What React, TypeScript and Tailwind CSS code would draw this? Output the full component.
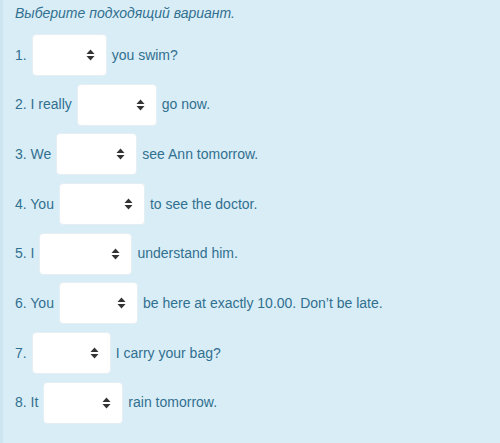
import React from "react";

const rows: { pre: string; post: string; w: number }[] = [
  { pre: "1.", post: "you swim?", w: 75 },
  { pre: "2. I really", post: "go now.", w: 80 },
  { pre: "3. We", post: "see Ann tomorrow.", w: 81 },
  { pre: "4. You", post: "to see the doctor.", w: 86 },
  { pre: "5. I", post: "understand him.", w: 93 },
  { pre: "6. You", post: "be here at exactly 10.00. Don’t be late.", w: 79 },
  { pre: "7.", post: "I carry your bag?", w: 79 },
  { pre: "8. It", post: "rain tomorrow.", w: 80 },
];

function Arrows() {
  return (
    <svg width="9" height="12" viewBox="0 0 9 12" className="shrink-0">
      <path d="M4.5 0.5 L8.5 5 L0.5 5 Z" fill="#333" />
      <path d="M0.5 7 L8.5 7 L4.5 11.5 Z" fill="#333" />
    </svg>
  );
}

export default function App() {
  return (
    <div
      className="w-[500px] h-[443px] bg-[#d9edf7] border-l-[3px] border-[#cde5f1] text-[#31708f] text-[14px] pl-[12px] pt-[3px]"
      style={{ fontFamily: '"Liberation Sans", Arial, sans-serif' }}
    >
      <div className="italic leading-[20px]">Выберите подходящий вариант.</div>
      <div className="mt-[11px] flex flex-col gap-[7.7px]">
        {rows.map((r, i) => (
          <div key={i} className="flex items-center h-[42px]">
            <span>{r.pre}</span>
            <div
              className="ml-[5px] mr-[5px] h-[42px] bg-white rounded-[4px] border border-[#e4eef3] flex items-center justify-end pr-[11px]"
              style={{ width: r.w }}
            >
              <Arrows />
            </div>
            <span>{r.post}</span>
          </div>
        ))}
      </div>
    </div>
  );
}
